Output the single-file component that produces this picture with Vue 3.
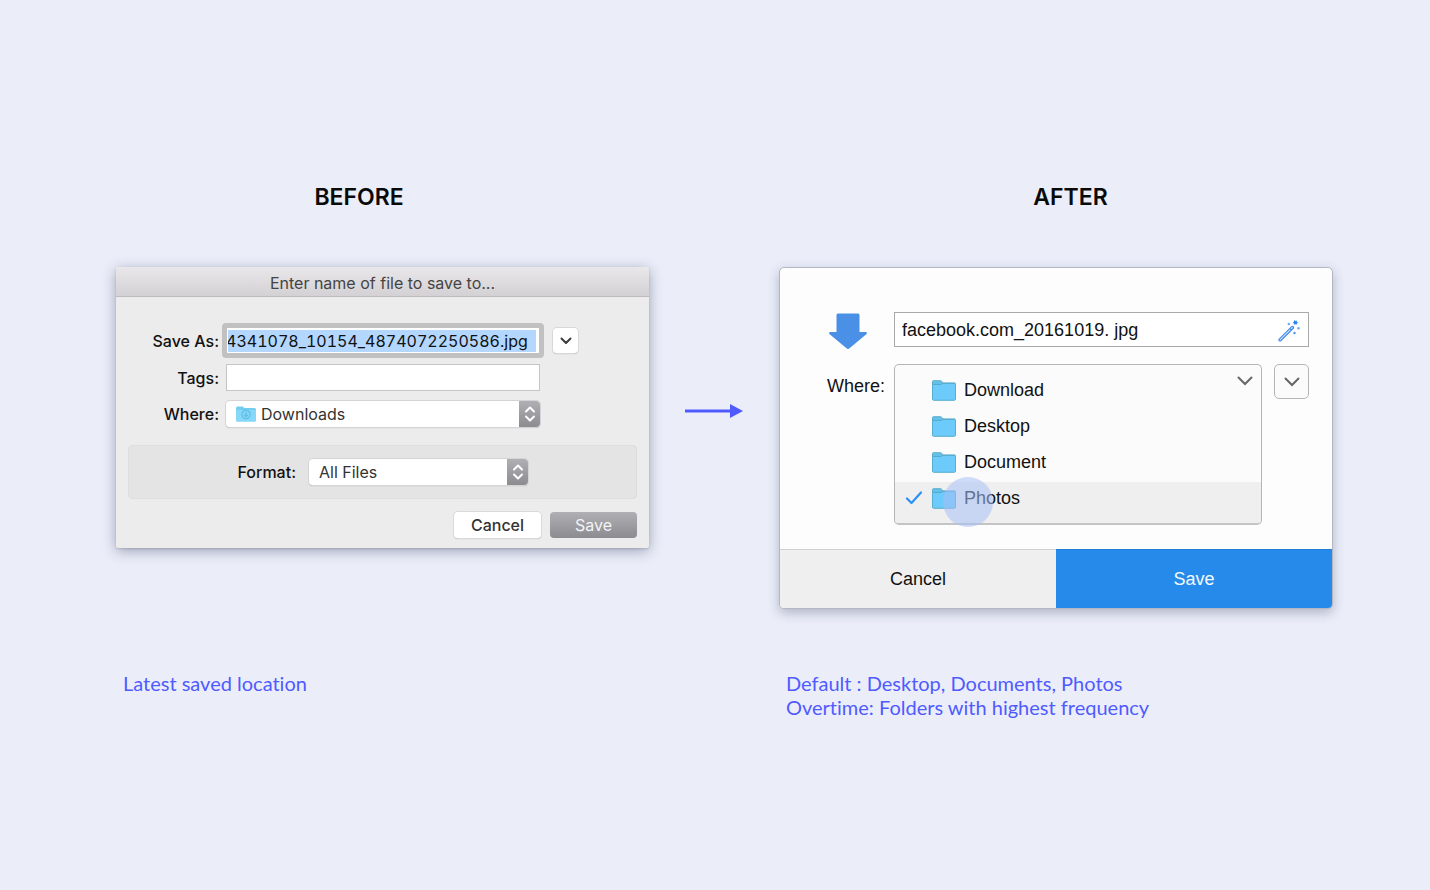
<script setup>
import { ref } from 'vue'

const fileName = ref('4341078_10154_4874072250586.jpg')
const tags = ref('')
const newName = ref('facebook.com_20161019. jpg')
const folders = ['Download', 'Desktop', 'Document', 'Photos']
const selected = ref('Photos')
</script>

<template>
  <main class="page">
    <section class="side before">
      <h2>BEFORE</h2>
      <form class="mac" @submit.prevent>
        <header class="mac-title">Enter name of file to save to...</header>
        <div class="mac-fields">
          <label for="save-as">Save As:</label>
          <div class="name-row">
            <input id="save-as" v-model="fileName" class="name-input" type="text" />
            <button class="expand" type="button" aria-label="Expand">
              <svg width="12" height="8" viewBox="0 0 12 8"><path d="M1.5 1.5 6 6l4.500-4.500" fill="none" stroke="#3c3c3c" stroke-width="2" stroke-linecap="round" stroke-linejoin="round" /></svg>
            </button>
          </div>

          <label for="tags">Tags:</label>
          <input id="tags" v-model="tags" class="tags-input" type="text" />

          <label for="where">Where:</label>
          <div class="picker with-icon">
            <select id="where"><option>Downloads</option></select>
            <svg class="dl-folder" width="20" height="16" viewBox="0 0 20 16">
              <path d="M0 2Q0 .5 1.500.5H6.500L8.500 2H18.500Q20 2 20 3.500V14Q20 15.500 18.500 15.500H1.500Q0 15.500 0 14Z" fill="#72cdf0" />
              <path d="M0 4H20V14Q20 15.500 18.500 15.500H1.500Q0 15.500 0 14Z" fill="#86d8f8" />
              <circle cx="10" cy="8.500" r="4.200" fill="none" stroke="#5fbfe6" stroke-width="1.200" />
              <path d="M10 6v4.500M8 8.700l2 2 2-2" fill="none" stroke="#5fbfe6" stroke-width="1.300" />
            </svg>
            <span class="stepper">
              <svg width="12" height="18" viewBox="0 0 12 18"><path d="M2 6.500 6 2.500l4 4M2 11.500l4 4 4-4" fill="none" stroke="#fff" stroke-width="2" stroke-linecap="round" stroke-linejoin="round" /></svg>
            </span>
          </div>
        </div>

        <div class="format">
          <label for="format">Format:</label>
          <div class="picker">
            <select id="format"><option>All Files</option></select>
            <span class="stepper">
              <svg width="12" height="18" viewBox="0 0 12 18"><path d="M2 6.500 6 2.500l4 4M2 11.500l4 4 4-4" fill="none" stroke="#fff" stroke-width="2" stroke-linecap="round" stroke-linejoin="round" /></svg>
            </span>
          </div>
        </div>

        <div class="mac-actions">
          <button class="mac-btn" type="button">Cancel</button>
          <button class="mac-btn primary" type="submit">Save</button>
        </div>
      </form>
      <p>Latest saved location</p>
    </section>

    <svg class="arrow" width="58" height="14" viewBox="0 0 58 14">
      <path d="M0 7H46" stroke="#4f5bff" stroke-width="3" />
      <path d="M45 0 58 7 45 14Z" fill="#4f5bff" />
    </svg>

    <section class="side after">
      <h2>AFTER</h2>
      <form class="flat" @submit.prevent>
        <div class="flat-body">
          <svg class="down" width="40" height="38" viewBox="0 0 40 38">
            <path d="M10 1.500H30Q31.500 1.500 31.500 3V20H37.500Q40 20.500 38.300 22.300L21.500 36.300Q20 37.500 18.500 36.300L1.700 22.300Q0 20.500 2.500 20H8.500V3Q8.500 1.500 10 1.500Z" fill="#4a90e6" />
          </svg>
          <div class="file">
            <input v-model="newName" type="text" aria-label="File name" />
            <svg class="wand" width="24" height="24" viewBox="0 0 24 24">
              <path d="M2.200 20.100 14.700 7.600Q15.400 7 16.200 7.700T16.200 9.300L3.700 21.700Q2.900 22.300 2.200 21.600T2.200 20.100ZM12.800 9.500l1.500 1.500" fill="#dcebff" stroke="#4189ea" stroke-width="1.200" />
              <path d="M17.300 1l1 1 1.300-.6.300 1.400 1.200.800-1.200.800-.3 1.400-1.300-.6-1.300.6-.2-1.500-1-.8 1.100-.7Z" fill="#2e86f0" />
              <circle cx="11.800" cy="5" r="1.200" fill="#6aa8f5" />
              <circle cx="21.500" cy="9.300" r="1.200" fill="#6aa8f5" />
              <circle cx="17.500" cy="14" r="1.200" fill="#4a90ea" />
            </svg>
          </div>

          <span id="folder-label" class="where">Where:</span>
          <div class="menu">
            <ul role="listbox" aria-labelledby="folder-label">
              <li
                v-for="name in folders"
                :key="name"
                role="option"
                :aria-selected="name === selected"
                :class="{ chosen: name === selected }"
                @click="selected = name"
              >
                <svg class="tick" width="18" height="14" viewBox="0 0 18 14">
                  <path v-if="name === selected" d="M2 7.500 6.500 12 16 1.500" fill="none" stroke="#2b90fa" stroke-width="2.200" stroke-linecap="round" stroke-linejoin="round" />
                </svg>
                <svg width="24" height="21" viewBox="0 0 24 21">
                  <path d="M.5 19V1.500Q.5.700 1.300.700H8.500Q9.300.700 9.900 1.500L11 3H22.500Q23.500 3 23.500 4V19Q23.500 20.300 22.300 20.300H1.700Q.5 20.300.5 19Z" fill="#66bfe6" stroke="#5aaed0" />
                  <path d="M1 5H9L11 3.700H23V19.500H1Z" fill="#6ccbfb" />
                  <path d="M1 4.500H9L11 3.300H23" fill="none" stroke="#56aace" />
                </svg>
                <span>{{ name }}</span>
              </li>
            </ul>
            <button class="collapse" type="button" aria-label="Close folder list">
              <svg width="16" height="10" viewBox="0 0 16 10"><path d="M1.500 1.500 8 8l6.500-6.500" fill="none" stroke="#666" stroke-width="2" stroke-linecap="round" /></svg>
            </button>
            <span class="touch"></span>
          </div>
          <button class="more" type="button" aria-label="More options">
            <svg width="16" height="10" viewBox="0 0 16 10"><path d="M1.500 1.500 8 8l6.500-6.500" fill="none" stroke="#666" stroke-width="2" stroke-linecap="round" /></svg>
          </button>
        </div>
        <footer>
          <button type="button">Cancel</button>
          <button class="primary" type="submit">Save</button>
        </footer>
      </form>
      <p>Default : Desktop, Documents, Photos<br />Overtime: Folders with highest frequency</p>
    </section>
  </main>
</template>

<style>
body {
  background: #ebeef9;
}
</style>

<style scoped>
* {
  box-sizing: border-box;
}
.page {
  display: grid;
  grid-template-columns: minmax(0, 533fr) minmax(58px, 130fr) minmax(0, 554fr);
  grid-template-rows: auto auto auto;
  align-content: start;
  min-height: 100vh;
  padding: 181px 97px 100px 116px;
  background: #ebeef9;
}
.side {
  display: grid;
  grid-row: 1 / 4;
  grid-template-rows: subgrid;
  align-items: start;
}
.before { grid-column: 1; }
.after { grid-column: 3; }
h2 {
  margin: 0 0 54px;
  font: 600 23px/32px Inter, sans-serif;
  text-align: center;
  color: #0a0a0a;
}
.before h2 { padding-right: 47px; }
.after h2 { padding-left: 29px; }
p {
  margin: 62px 0 0;
  padding-left: 7px;
  font: 20px/24px Lato, sans-serif;
  font-variant-ligatures: none;
  color: #4f5bff;
}
.arrow {
  grid-area: 2 / 2;
  justify-self: center;
  margin-top: 137px;
}
button,
input,
select {
  margin: 0;
  border: 0;
  font: inherit;
  color: inherit;
}

.mac {
  background: #ececec;
  border-radius: 2px;
  box-shadow: 0 3px 14px rgba(40, 45, 80, 0.4), 0 1px 2px rgba(40, 45, 80, 0.15);
  font: 16px/20px Inter, sans-serif;
  color: #111;
}
.mac-title {
  height: 30px;
  line-height: 32px;
  border-bottom: 1px solid #bdbbbd;
  border-radius: 2px 2px 0 0;
  background: linear-gradient(#e9e7e9, #d3d1d3);
  text-align: center;
  color: #444;
}
.mac label {
  font-weight: 500;
  text-align: right;
}
.mac-fields {
  display: grid;
  grid-template-columns: 103px minmax(0, 314px);
  column-gap: 7px;
  row-gap: 10px;
  align-items: center;
  padding-top: 30px;
}
.name-row {
  display: flex;
  align-items: center;
  gap: 9px;
  height: 27px;
  margin: 0 -38px 0 -4px;
}
.name-input {
  flex: 1;
  min-width: 0;
  height: 35px;
  padding: 2px 3px 1px 1px;
  border: 5px solid #c1c1c1;
  border-radius: 4px;
  background: linear-gradient(#b3d7ff, #b3d7ff) content-box, #fff;
  font-variant-numeric: tabular-nums;
  text-indent: -2px;
  outline: 0;
}
.expand {
  display: grid;
  place-items: center;
  width: 25px;
  height: 25px;
  padding: 0;
  border-radius: 4px;
  background: #fff;
  box-shadow: 0 0 0 1px #d8d8d8, 0 1px 1px rgba(0, 0, 0, 0.3);
}
.tags-input {
  width: 100%;
  height: 27px;
  padding: 0 6px;
  border: 1px solid #c5c5c5;
  background: #fff;
}
.picker {
  position: relative;
  height: 26px;
}
.picker select {
  display: block;
  width: 100%;
  height: 26px;
  padding: 0 32px 0 10px;
  appearance: none;
  border-radius: 4px;
  background: #fff;
  box-shadow: 0 0 0 1px #d4d4d4, 0 1px 1px rgba(0, 0, 0, 0.3);
  color: #333;
}
.with-icon select { padding-left: 35px; }
.dl-folder {
  position: absolute;
  top: 5px;
  left: 10px;
  pointer-events: none;
}
.stepper {
  position: absolute;
  inset: 0 0 0 auto;
  display: grid;
  place-items: center;
  width: 21px;
  border-radius: 0 4px 4px 0;
  background: linear-gradient(#b0afb4, #8c8b90);
  pointer-events: none;
}
.format {
  display: grid;
  grid-template-columns: 167px minmax(0, 219px);
  column-gap: 13px;
  align-items: center;
  margin: 18px 12px 0;
  padding: 13px 0;
  border: 1px solid #dedede;
  border-radius: 4px;
  background: #e4e4e4;
}
.mac-actions {
  display: flex;
  justify-content: flex-end;
  gap: 9px;
  padding: 13px 12px 10px;
}
.mac-btn {
  width: 87px;
  height: 26px;
  padding: 0;
  border-radius: 4px;
  background: #fff;
  box-shadow: 0 0 0 1px #dadada, 0 1px 1px rgba(0, 0, 0, 0.3);
  color: #333;
  font-weight: 500;
}
.mac-btn.primary {
  background: linear-gradient(#b0afb4, #8c8b90);
  box-shadow: none;
  color: #f3f3f5;
  font-weight: 400;
}

.flat {
  overflow: hidden;
  border: 1px solid #b4b6c3;
  border-radius: 5px;
  background: #fdfdfd;
  box-shadow: 0 4px 12px rgba(40, 45, 80, 0.3);
  font: 18px/24px "Liberation Sans", Arial, sans-serif;
  color: #111;
}
.flat-body {
  display: grid;
  grid-template-columns: 59px minmax(0, 1fr) 35px;
  align-items: start;
  row-gap: 14px;
  padding: 44px 23px 24px 47px;
}
.down {
  justify-self: start;
  margin-left: 1px;
}
.file {
  position: relative;
  grid-column: 2 / 4;
  margin-left: 8px;
}
.file input {
  display: block;
  width: 100%;
  height: 35px;
  padding: 2px 40px 0 7px;
  border: 1px solid #a9a9a9;
  background: #fff;
}
.wand {
  position: absolute;
  top: 7px;
  right: 8px;
}
.where { padding-top: 10px; }
.menu {
  position: relative;
  margin: 0 12px 0 8px;
}
.menu ul {
  margin: 0;
  padding: 9px 0 0;
  overflow: hidden;
  list-style: none;
  border: 1px solid #b5b5b5;
  border-bottom: 2px solid #c4c4c4;
  border-radius: 5px;
  background: #fbfbfb;
}
.menu li {
  display: flex;
  align-items: center;
  height: 36px;
  padding: 0 0 4px 10px;
}
.menu li.chosen {
  height: 41px;
  padding-bottom: 9px;
  background: #efefef;
}
.tick { margin-right: 9px; }
.menu li span { margin-left: 8px; }
.collapse {
  position: absolute;
  top: 9px;
  right: 9px;
  display: grid;
  place-items: center;
  width: 16px;
  height: 16px;
  padding: 0;
  background: none;
}
.touch {
  position: absolute;
  top: 113px;
  left: 49px;
  width: 50px;
  height: 50px;
  border-radius: 50%;
  background: rgba(168, 192, 245, 0.55);
  pointer-events: none;
}
.more {
  display: grid;
  place-items: center;
  height: 35px;
  padding: 0;
  border: 1px solid #b5b5b5;
  border-radius: 5px;
  background: #fbfbfb;
}
footer {
  display: grid;
  grid-template-columns: 1fr 1fr;
}
footer button {
  height: 59px;
  padding: 0;
  border-top: 1px solid #d0d0d0;
  background: #efefef;
}
footer .primary {
  border-top-color: #1f7ed8;
  background: #258aea;
  color: #f4f9ff;
}
</style>
